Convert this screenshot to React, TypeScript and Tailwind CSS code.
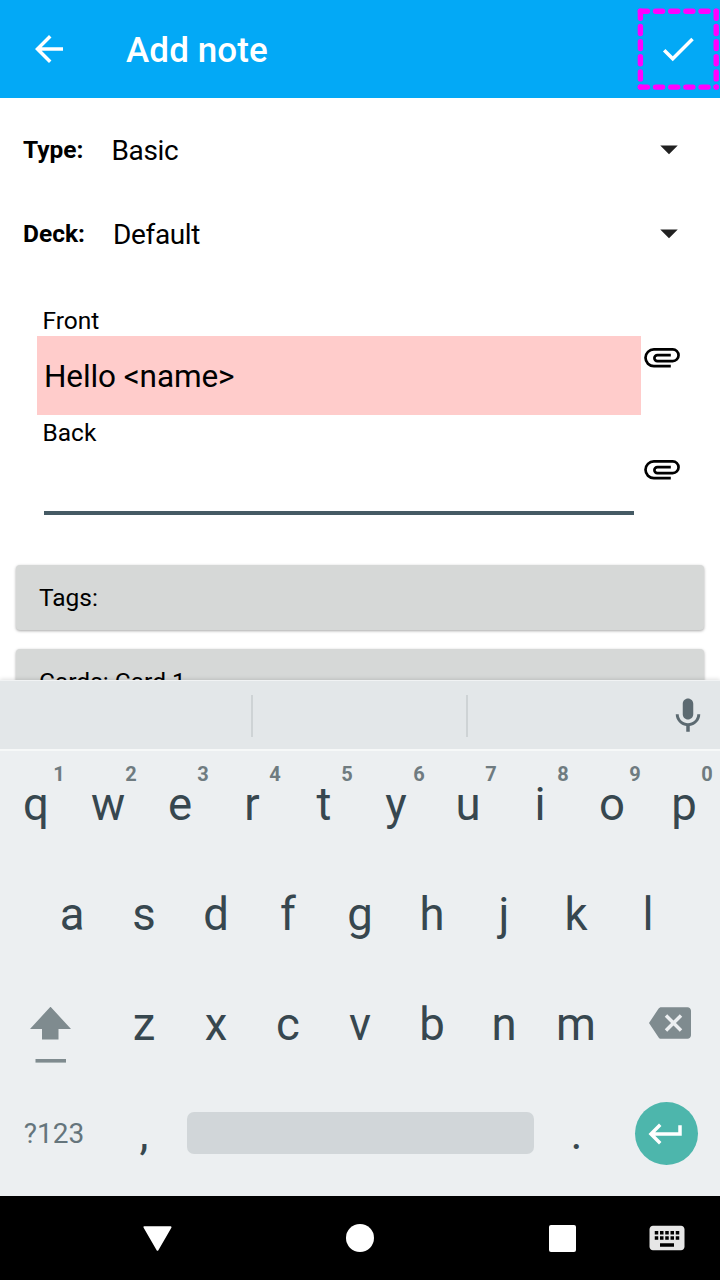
import type { ReactNode } from "react";

function Icon({ d, className }: { d: string; className?: string }) {
  return (
    <svg viewBox="0 0 24 24" className={"block h-[42px] w-[42px] shrink-0 fill-current " + (className ?? "")}>
      <path d={d} />
    </svg>
  );
}

const BACK = "M20 11H7.83l5.59-5.59L12 4l-8 8 8 8 1.41-1.41L7.83 13H20v-2z";
const CHECK = "M9 16.17L4.83 12l-1.42 1.41L9 19 21 7l-1.41-1.41z";
const MIC =
  "M12 14c1.66 0 3-1.34 3-3V5c0-1.66-1.34-3-3-3S9 3.34 9 5v6c0 1.66 1.34 3 3 3zm5.3-3c0 3-2.54 5.1-5.3 5.1S6.7 14 6.7 11H5c0 3.41 2.72 6.23 6 6.72V21h2v-3.28c3.28-.48 6-3.3 6-6.72h-1.7z";
const RETURN = "M19 7v4H5.83l3.58-3.59L8 6l-6 6 6 6 1.41-1.41L5.83 13H21V7z";
const BACKSPACE =
  "M22 3H7c-.69 0-1.23.35-1.59.88L0 12l5.41 8.11c.36.53.9.89 1.59.89h15c1.1 0 2-.9 2-2V5c0-1.1-.9-2-2-2zm-3 12.59L17.59 17 14 13.41 10.41 17 9 15.59 12.59 12 9 8.41 10.41 7 14 10.59 17.59 7 19 8.41 15.41 12 19 15.59z";
const KEYBOARD =
  "M20 5H4c-1.1 0-1.99.9-1.99 2L2 17c0 1.1.9 2 2 2h16c1.1 0 2-.9 2-2V7c0-1.1-.9-2-2-2zm-9 3h2v2h-2V8zm0 3h2v2h-2v-2zM8 8h2v2H8V8zm0 3h2v2H8v-2zm-1 2H5v-2h2v2zm0-3H5V8h2v2zm9 7H8v-2h8v2zm0-4h-2v-2h2v2zm0-3h-2V8h2v2zm3 3h-2v-2h2v2zm0-3h-2V8h2v2z";

function Clip() {
  return (
    <svg viewBox="0 0 36 20" className="mt-[45px] ml-[3px] block h-5 w-9 shrink-0" fill="none" stroke="#000" strokeWidth="2.7">
      <path d="M26.8 18.2H9.9A8.4 8.4 0 0 1 9.9 1.4H28.7A5.85 5.85 0 0 1 28.7 13.1H13.4A3 3 0 0 1 13.4 7.1H26.8" />
    </svg>
  );
}

function Spinner({ label, value, gap }: { label: string; value: string; gap: string }) {
  return (
    <div className="flex h-[84px] items-center pr-[30px] pl-[23px]">
      <span className={"text-[24.5px] leading-[84px] font-bold " + gap}>{label}</span>
      <span className="flex-1 pt-[2px] text-[28px] leading-[84px] tracking-[-0.35px]">{value}</span>
      <Icon d="M7 10l5 5 5-5z" className="mb-[2px] text-[#212121]" />
    </div>
  );
}

function Field({ label, children }: { label: string; children: ReactNode }) {
  return (
    <div className="flex h-[112px] pl-[37px]">
      <div className="w-[604px]">
        <div className="flex h-[33px] items-center pt-[2px] pl-[5.5px] text-[24.5px] leading-[31px]">{label}</div>
        {children}
      </div>
      <Clip />
    </div>
  );
}

function Card({ children }: { children: ReactNode }) {
  return (
    <div className="mx-4 h-[65px] shrink-0 rounded-[4px] bg-[#d6d8d7] pl-[23px] text-[24.5px] leading-[66px] shadow-[0_1px_3px_rgba(0,0,0,0.35)]">
      {children}
    </div>
  );
}

function Key({ char, hint }: { char: string; hint?: string }) {
  return (
    <div className="relative flex w-[72px] justify-center pt-[1px] text-[45.5px] leading-[110px]">
      {char}
      {hint && (
        <span className="absolute top-[15px] left-[49px] w-5 text-center text-[20px] leading-5 font-bold text-[#6f7b80]">
          {hint}
        </span>
      )}
    </div>
  );
}

function Row({ chars, hints }: { chars: string; hints?: string }) {
  return (
    <>
      {chars.split("").map((c, i) => (
        <Key key={c} char={c} hint={hints?.[i]} />
      ))}
    </>
  );
}

export default function App() {
  return (
    <div className="flex h-[1280px] w-[720px] flex-col overflow-hidden bg-white font-[Roboto,sans-serif] text-black">
      <header className="relative flex h-[98px] shrink-0 items-center bg-[#03a9f6] pr-[21px] pl-[28px] text-white">
        <Icon d={BACK} />
        <h1 className="flex-1 pt-[4px] pl-[56px] text-[35px] leading-[42px] font-medium tracking-[0.1px]">Add note</h1>
        <Icon d={CHECK} />
        <svg
          className="absolute top-0 right-0 h-[98px] w-[90px]"
          viewBox="630 0 90 98"
          stroke="#ff00ff"
          strokeWidth="5.4"
          strokeLinecap="round"
          strokeDasharray="7 8.15"
        >
          <path d="M640.4 11.3H716.2" />
          <path d="M640.4 87.1H716.2" />
          <path d="M640.4 11.3V87.1" />
          <path d="M716.2 11.3V87.1" />
        </svg>
      </header>

      <main className="flex h-[582px] shrink-0 flex-col overflow-hidden pt-[10px]">
        <Spinner label="Type:" value="Basic" gap="w-[88.5px]" />
        <Spinner label="Deck:" value="Default" gap="w-[90px]" />
        <div className="mt-[27px] mb-[38px]">
          <Field label="Front">
            <div className="h-[79px] bg-[#ffcccb] pl-[7px] text-[31.5px] leading-[81px] tracking-[-0.1px]">Hello &lt;name&gt;</div>
          </Field>
          <Field label="Back">
            <div className="mx-[7px] h-[67px] border-b-4 border-[#455a64]" />
          </Field>
        </div>
        <div className="flex flex-col gap-[19px]">
          <Card>Tags:</Card>
          <Card>Cards: Card 1</Card>
        </div>
      </main>

      <section className="relative flex h-[516px] shrink-0 flex-col bg-[#eceff1] text-[#37474f] shadow-[0_-1px_4px_rgba(0,0,0,0.12)]">
        <div className="flex h-[69px] items-center border-t border-[#f1f3f4] bg-[#e3e7e9] pt-[2px]">
          <div className="h-[42px] w-[253px] border-r-2 border-[#ced3d5]" />
          <div className="h-[42px] w-[214.5px] border-r-2 border-[#ced3d5]" />
          <div className="flex flex-1 justify-end pr-[11px]">
            <Icon d={MIC} className="text-[#5c6a71]" />
          </div>
        </div>
        <div className="flex h-[110px] border-t-2 border-[#f6f8f8]">
          <div className="-mt-[2px] flex">
            <Row chars="qwertyuiop" hints="1234567890" />
          </div>
        </div>
        <div className="flex h-[110px] justify-center">
          <Row chars="asdfghjkl" />
        </div>
        <div className="flex h-[110px]">
          <div className="flex w-[108px] flex-col items-center pt-[38px] pr-[6.5px]">
            <svg viewBox="0 0 42 56" className="h-14 w-[42px] fill-[#7f8b8f]">
              <path d="M20.5 -0.3L41 22H28.5V32.4H12V22H0z" />
              <path d="M5.5 52H36V55.6H5.5z" />
            </svg>
          </div>
          <Row chars="zxcvbnm" />
          <div className="flex flex-1 items-center justify-end pr-[29.5px] pb-[2px]">
            <Icon d={BACKSPACE} className="text-[#7f8b8f]" />
          </div>
        </div>
        <div className="flex h-[108px] items-center">
          <div className="w-[108px] pt-[2px] text-center text-[28px] text-[#65757c]">?123</div>
          <Key char="," />
          <div className="mr-[6.5px] ml-[6.5px] h-[42px] w-[347.5px] rounded-[7px] bg-[#d1d6d9]" />
          <Key char="." />
          <div className="ml-[22.5px] flex h-[63px] w-[63px] items-center justify-center rounded-full bg-[#4db6ac] text-white">
            <Icon d={RETURN} className="mt-[2px] mr-px" />
          </div>
        </div>
      </section>

      <nav className="flex h-[84px] shrink-0 items-center bg-black text-white">
        <svg viewBox="0 0 29 25" className="ml-[143px] h-[25px] w-[29px] fill-white stroke-white stroke-2" strokeLinejoin="round">
          <path d="M1.5 1.2H27.5L14.5 23.8z" />
        </svg>
        <div className="ml-[173.7px] h-7 w-7 rounded-full bg-white" />
        <div className="mt-px ml-[175.3px] h-[27px] w-[27px] rounded-[2px] bg-white" />
        <Icon d={KEYBOARD} className="ml-[70px] text-[#e6e6e6]" />
      </nav>
    </div>
  );
}
